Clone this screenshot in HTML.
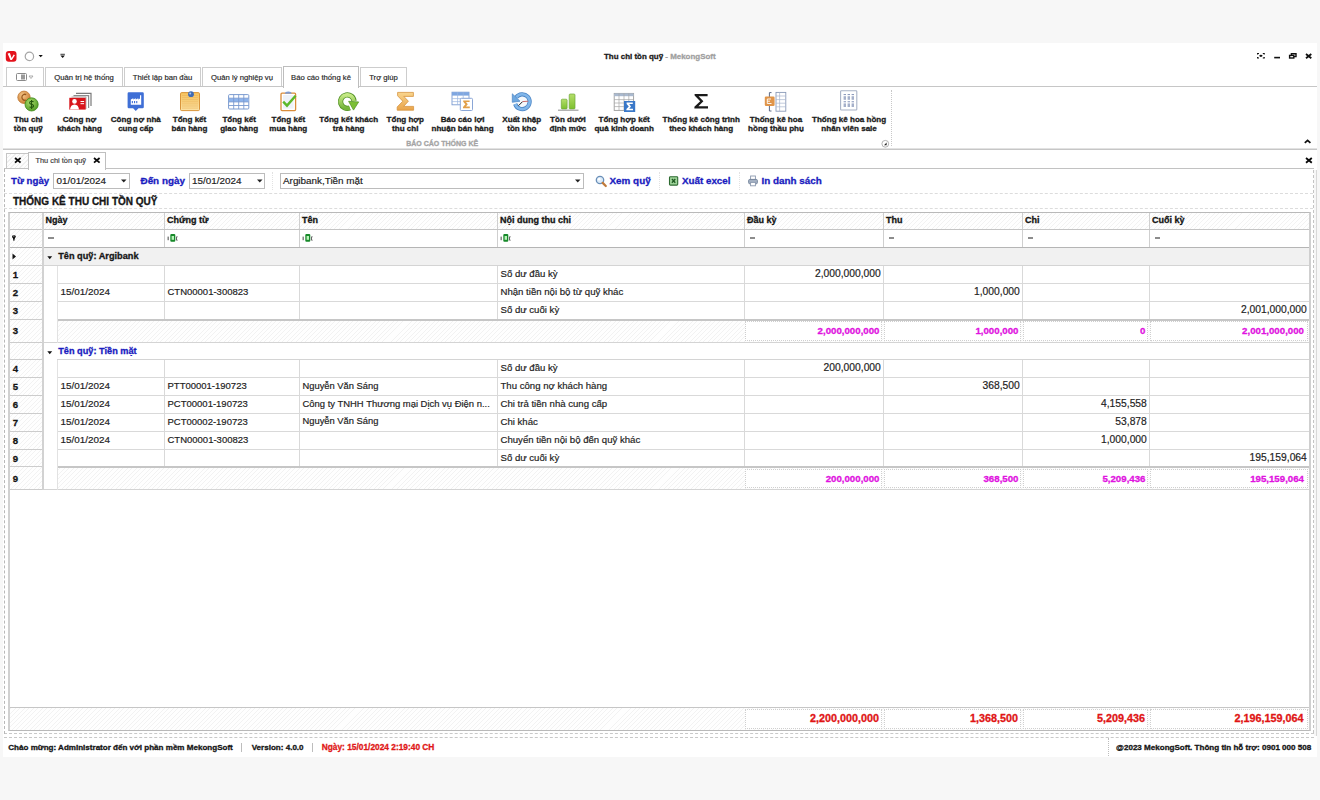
<!DOCTYPE html>
<html><head><meta charset="utf-8">
<style>
*{margin:0;padding:0;box-sizing:border-box}
html,body{width:1320px;height:800px;overflow:hidden;background:#f7f7f7;font-family:"Liberation Sans",sans-serif;color:#1e1e1e;position:relative}
.a{position:absolute}
.t{position:absolute;white-space:nowrap;line-height:1;-webkit-text-stroke:0.18px currentColor}
.b{-webkit-text-stroke:0.3px currentColor}
</style></head><body>
<div class="a" style="left:3px;top:43px;width:1314px;height:714px;background:#fff"></div>
<svg class="a" style="left:5px;top:50px" width="13" height="13" viewBox="0 0 13 13"><rect x="0.8" y="1" width="10.7" height="10.7" rx="3" fill="#e4121c"/><path d="M2.6 3.4 L4.9 3.1 L6.6 8 L8.6 4.6 L9.9 5.2 L6.9 10 L5.4 10 Z" fill="#fff"/></svg>
<svg class="a" style="left:24px;top:51px" width="22" height="11" viewBox="0 0 22 11"><circle cx="5.4" cy="5.4" r="4.2" fill="#fff" stroke="#a6a6a6" stroke-width="1.2"/><path d="M14.6 4.1 L18.8 4.1 L16.7 6.2 Z" fill="#111"/></svg>
<svg class="a" style="left:58px;top:52px" width="8" height="8" viewBox="0 0 8 8"><rect x="2.4" y="1.8" width="4.5" height="0.9" fill="#222"/><path d="M2.4 3.5 L6.9 3.5 L4.65 6 Z" fill="#111"/></svg>
<div class="t b" style="left:604.00px;top:52.77px;font-size:7.95px;font-weight:bold;color:#1a1a1a;">Thu chi tồn quỹ <span style="color:#a0a0a0">- MekongSoft</span></div>
<svg class="a" style="left:1255px;top:51px" width="60" height="11" viewBox="0 0 60 11">
<g fill="none" stroke="#111" stroke-width="1.2">
<path d="M2.6 3.6 V2.5 H4 M7.8 2.5 H9.2 V3.6 M9.2 6 V7 H7.8 M4 7 H2.6 V6"/>
<ellipse cx="5.9" cy="4.8" rx="1.6" ry="1.1" fill="#111" stroke="none"/>
<path d="M19.2 6.6 H25" stroke-width="1.6"/>
<rect x="34.6" y="4.4" width="4.2" height="2.6" stroke-width="1.4"/>
<path d="M36.4 4.2 V2.8 H41 V5.6 H39" stroke-width="1.4"/>
<path d="M51 3 L56.3 7.2 M56.3 3 L51 7.2" stroke-width="1.8"/>
</g></svg>
<div class="a" style="left:3px;top:86px;width:1314px;height:1px;background:#c6c6c6"></div>
<div class="a" style="left:6px;top:67px;width:38px;height:19px;background:#fff;border:1px solid #cdcdcd;border-bottom:none"></div>
<div class="a" style="left:45px;top:67px;width:78px;height:19px;background:#fff;border:1px solid #cdcdcd;border-bottom:none"></div>
<div class="t" style="left:45px;width:78px;text-align:center;top:73.98px;font-size:7.7px;color:#2a2a2a">Quản trị hệ thống</div>
<div class="a" style="left:124px;top:67px;width:77px;height:19px;background:#fff;border:1px solid #cdcdcd;border-bottom:none"></div>
<div class="t" style="left:124px;width:77px;text-align:center;top:73.98px;font-size:7.7px;color:#2a2a2a">Thiết lập ban đầu</div>
<div class="a" style="left:202px;top:67px;width:80px;height:19px;background:#fff;border:1px solid #cdcdcd;border-bottom:none"></div>
<div class="t" style="left:202px;width:80px;text-align:center;top:73.98px;font-size:7.7px;color:#2a2a2a">Quản lý nghiệp vụ</div>
<div class="a" style="left:283px;top:66px;width:76px;height:22px;background:#fff;border:1px solid #bdbdbd;border-bottom:none"></div>
<div class="t" style="left:283px;width:76px;text-align:center;top:73.98px;font-size:7.7px;color:#2a2a2a">Báo cáo thống kê</div>
<div class="a" style="left:360px;top:67px;width:47px;height:19px;background:#fff;border:1px solid #cdcdcd;border-bottom:none"></div>
<div class="t" style="left:360px;width:47px;text-align:center;top:73.98px;font-size:7.7px;color:#2a2a2a">Trợ giúp</div>
<svg class="a" style="left:15px;top:72px" width="22" height="10" viewBox="0 0 22 10"><rect x="1.5" y="1.5" width="10" height="7" rx="1" fill="#fff" stroke="#8a8a8a"/><rect x="6" y="2.5" width="4" height="5" fill="#9a9a9a"/><path d="M14 4 L18 4 L16 6.5 Z" fill="none" stroke="#999" stroke-width="0.8"/></svg>
<div class="t b" style="left:-31.70px;top:115.89px;font-size:8.05px;font-weight:bold;color:#1c1c1c;width:120px;text-align:center">Thu chi</div>
<div class="t b" style="left:-31.70px;top:124.89px;font-size:8.05px;font-weight:bold;color:#1c1c1c;width:120px;text-align:center">tồn quỹ</div>
<div class="t b" style="left:19.50px;top:115.89px;font-size:8.05px;font-weight:bold;color:#1c1c1c;width:120px;text-align:center">Công nợ</div>
<div class="t b" style="left:19.50px;top:124.89px;font-size:8.05px;font-weight:bold;color:#1c1c1c;width:120px;text-align:center">khách hàng</div>
<div class="t b" style="left:75.80px;top:115.89px;font-size:8.05px;font-weight:bold;color:#1c1c1c;width:120px;text-align:center">Công nợ nhà</div>
<div class="t b" style="left:75.80px;top:124.89px;font-size:8.05px;font-weight:bold;color:#1c1c1c;width:120px;text-align:center">cung cấp</div>
<div class="t b" style="left:129.50px;top:115.89px;font-size:8.05px;font-weight:bold;color:#1c1c1c;width:120px;text-align:center">Tổng kết</div>
<div class="t b" style="left:129.50px;top:124.89px;font-size:8.05px;font-weight:bold;color:#1c1c1c;width:120px;text-align:center">bán hàng</div>
<div class="t b" style="left:179.15px;top:115.89px;font-size:8.05px;font-weight:bold;color:#1c1c1c;width:120px;text-align:center">Tổng kết</div>
<div class="t b" style="left:179.15px;top:124.89px;font-size:8.05px;font-weight:bold;color:#1c1c1c;width:120px;text-align:center">giao hàng</div>
<div class="t b" style="left:228.30px;top:115.89px;font-size:8.05px;font-weight:bold;color:#1c1c1c;width:120px;text-align:center">Tổng kết</div>
<div class="t b" style="left:228.30px;top:124.89px;font-size:8.05px;font-weight:bold;color:#1c1c1c;width:120px;text-align:center">mua hàng</div>
<div class="t b" style="left:288.65px;top:115.89px;font-size:8.05px;font-weight:bold;color:#1c1c1c;width:120px;text-align:center">Tổng kết khách</div>
<div class="t b" style="left:288.65px;top:124.89px;font-size:8.05px;font-weight:bold;color:#1c1c1c;width:120px;text-align:center">trả hàng</div>
<div class="t b" style="left:345.30px;top:115.89px;font-size:8.05px;font-weight:bold;color:#1c1c1c;width:120px;text-align:center">Tổng hợp</div>
<div class="t b" style="left:345.30px;top:124.89px;font-size:8.05px;font-weight:bold;color:#1c1c1c;width:120px;text-align:center">thu chi</div>
<div class="t b" style="left:402.55px;top:115.89px;font-size:8.05px;font-weight:bold;color:#1c1c1c;width:120px;text-align:center">Báo cáo lợi</div>
<div class="t b" style="left:402.55px;top:124.89px;font-size:8.05px;font-weight:bold;color:#1c1c1c;width:120px;text-align:center">nhuận bán hàng</div>
<div class="t b" style="left:461.80px;top:115.89px;font-size:8.05px;font-weight:bold;color:#1c1c1c;width:120px;text-align:center">Xuất nhập</div>
<div class="t b" style="left:461.80px;top:124.89px;font-size:8.05px;font-weight:bold;color:#1c1c1c;width:120px;text-align:center">tồn kho</div>
<div class="t b" style="left:507.90px;top:115.89px;font-size:8.05px;font-weight:bold;color:#1c1c1c;width:120px;text-align:center">Tồn dưới</div>
<div class="t b" style="left:507.90px;top:124.89px;font-size:8.05px;font-weight:bold;color:#1c1c1c;width:120px;text-align:center">định mức</div>
<div class="t b" style="left:564.15px;top:115.89px;font-size:8.05px;font-weight:bold;color:#1c1c1c;width:120px;text-align:center">Tổng hợp kết</div>
<div class="t b" style="left:564.15px;top:124.89px;font-size:8.05px;font-weight:bold;color:#1c1c1c;width:120px;text-align:center">quả kinh doanh</div>
<div class="t b" style="left:641.15px;top:115.89px;font-size:8.05px;font-weight:bold;color:#1c1c1c;width:120px;text-align:center">Thống kê công trình</div>
<div class="t b" style="left:641.15px;top:124.89px;font-size:8.05px;font-weight:bold;color:#1c1c1c;width:120px;text-align:center">theo khách hàng</div>
<div class="t b" style="left:716.00px;top:115.89px;font-size:8.05px;font-weight:bold;color:#1c1c1c;width:120px;text-align:center">Thống kê hoa</div>
<div class="t b" style="left:716.00px;top:124.89px;font-size:8.05px;font-weight:bold;color:#1c1c1c;width:120px;text-align:center">hồng thầu phụ</div>
<div class="t b" style="left:789.10px;top:115.89px;font-size:8.05px;font-weight:bold;color:#1c1c1c;width:120px;text-align:center">Thống kê hoa hồng</div>
<div class="t b" style="left:789.10px;top:124.89px;font-size:8.05px;font-weight:bold;color:#1c1c1c;width:120px;text-align:center">nhân viên sale</div>
<div class="t b" style="left:406.20px;top:139.87px;font-size:7px;font-weight:bold;color:#a4a4a4;">BÁO CÁO THỐNG KÊ</div>
<svg class="a" style="left:880px;top:139px" width="10" height="10" viewBox="0 0 10 10"><circle cx="5.3" cy="4.8" r="3.4" fill="#fff" stroke="#a0a0a0" stroke-width="0.8"/><path d="M4 6.2 L6.6 6.2 L6.6 3.6 Z" fill="#222"/></svg>
<div class="a" style="left:891px;top:90px;width:1px;height:56px;border-left:1px dotted #c8c8c8"></div>
<svg class="a" style="left:1302px;top:137px" width="11" height="9" viewBox="0 0 11 9"><path d="M2.8 5.9 L5.6 3.3 L8.4 5.9" fill="none" stroke="#111" stroke-width="1.7"/></svg>
<div class="a" style="left:3px;top:148px;width:1314px;height:1px;background:#e2e2e2"></div>
<div class="a" style="left:3px;top:149px;width:1314px;height:1px;background:#c6c6c6"></div>
<svg class="a" style="left:0;top:0" width="900" height="120" viewBox="0 0 900 120">
<defs>
<radialGradient id="gOr" cx="0.4" cy="0.35" r="0.7"><stop offset="0" stop-color="#f6c98a"/><stop offset="1" stop-color="#c9782e"/></radialGradient>
<radialGradient id="gGr" cx="0.4" cy="0.35" r="0.7"><stop offset="0" stop-color="#a9dc6a"/><stop offset="1" stop-color="#4f9a23"/></radialGradient>
<linearGradient id="gNote" x1="0" y1="0" x2="0" y2="1"><stop offset="0" stop-color="#f7c35c"/><stop offset="1" stop-color="#fbe3a6"/></linearGradient>
<linearGradient id="gSig" x1="0" y1="0" x2="0" y2="1"><stop offset="0" stop-color="#f9d58e"/><stop offset="1" stop-color="#e9a44a"/></linearGradient>
<linearGradient id="gRef" x1="0" y1="0" x2="0" y2="1"><stop offset="0" stop-color="#c6ea86"/><stop offset="1" stop-color="#74b43a"/></linearGradient>
<linearGradient id="gBar" x1="0" y1="0" x2="0" y2="1"><stop offset="0" stop-color="#b5de6a"/><stop offset="1" stop-color="#7cbf2e"/></linearGradient>
</defs>
<!-- 1 coins -->
<circle cx="24" cy="97.3" r="6.2" fill="url(#gOr)" stroke="#c07a35" stroke-width="0.8"/>
<path d="M26.2 94.6 A3 3 0 1 0 26.2 100" fill="none" stroke="#9a5a1f" stroke-width="1.3"/>
<circle cx="31.6" cy="104.4" r="6.6" fill="url(#gGr)" stroke="#3f8a1b" stroke-width="0.8"/>
<path d="M33.6 101.8 Q31.6 100.6 29.9 101.9 Q29 103.6 31.6 104.3 Q34.2 105 33.3 106.8 Q31.6 108.1 29.6 106.9 M31.6 100 V109" fill="none" stroke="#23570d" stroke-width="1.1"/>
<!-- 2 cards -->
<path d="M76 93.3 H91 V106" fill="none" stroke="#7a7a7a" stroke-width="1.2"/>
<path d="M73.5 95.6 H88.6 V108" fill="none" stroke="#8c8c8c" stroke-width="1.2"/>
<path d="M71.5 97 H86 V109" fill="none" stroke="#a0a0a0" stroke-width="0.8"/>
<rect x="69.3" y="97.8" width="16.4" height="11.8" fill="#d8141a"/>
<circle cx="74.5" cy="101.4" r="2.3" fill="#fff"/>
<path d="M70 109.6 Q70.5 104.8 74.5 104.6 Q78.5 104.8 79 109.6 Z" fill="#fff"/>
<rect x="80.5" y="101" width="3.6" height="1" fill="#fff"/><rect x="80.5" y="103.2" width="3.6" height="1" fill="#fff"/>
<!-- 3 factory pin -->
<path d="M128.8 92.2 H142.6 Q143.8 92.2 143.8 93.4 V107 Q143.8 108.2 142.6 108.2 H138.5 L135.8 111 L133.1 108.2 H128.8 Q127.6 108.2 127.6 107 V93.4 Q127.6 92.2 128.8 92.2 Z" fill="#3f6fd6"/>
<path d="M130.8 104.8 V99.6 L133.3 98.2 V99.6 L135.8 98.2 V99.6 L138.3 98.2 V99.6 L140 98.6 V95.2 H141.2 V104.8 Z" fill="#fff"/>
<rect x="131.8" y="101" width="1.1" height="2.2" fill="#3f6fd6"/><rect x="134" y="101" width="1.1" height="2.2" fill="#3f6fd6"/><rect x="136.2" y="101" width="1.1" height="2.2" fill="#3f6fd6"/>
<!-- 4 notepad -->
<rect x="180.5" y="92.6" width="19" height="18" rx="1.2" fill="url(#gNote)" stroke="#d9953b" stroke-width="1"/>
<g stroke="#e9b25a" stroke-width="0.6"><path d="M182 95.5 H198 M182 97.6 H198 M182 99.7 H198 M182 101.8 H198 M182 103.9 H198 M182 106 H198 M182 108.1 H198"/></g>
<circle cx="191" cy="94.2" r="2.9" fill="#3f6bb5"/><circle cx="190.2" cy="93.4" r="1" fill="#a9c8ef"/>
<!-- 5 grid table -->
<rect x="228.6" y="94.6" width="20.2" height="14.4" rx="1" fill="#fff" stroke="#7b9bd0" stroke-width="1"/>
<rect x="229" y="98.3" width="19.4" height="3.6" fill="#8cb3ec"/>
<g stroke="#7b9bd0" stroke-width="0.9"><path d="M228.6 98.2 H248.8 M228.6 101.9 H248.8 M228.6 105.5 H248.8 M233.7 94.6 V109 M238.7 94.6 V109 M243.8 94.6 V109"/></g>
<!-- 6 clipboard -->
<rect x="281" y="93.2" width="14.6" height="17.4" rx="1" fill="#fff" stroke="#d98c3a" stroke-width="1.3"/>
<rect x="283" y="95" width="10.6" height="13.6" fill="#eef2f8"/>
<path d="M285 93.8 Q285 91.4 288.3 91.4 Q291.6 91.4 291.6 93.8 Z" fill="#7f9bd0"/>
<path d="M283.2 101.6 L287 105.6 L295.6 95.8" fill="none" stroke="#5cb82a" stroke-width="2.4"/>
<!-- 7 refresh -->
<path d="M349.8 107.9 A6.75 6.75 0 1 1 354.0 101.0" fill="none" stroke="#4f8f22" stroke-width="5.3"/>
<path d="M349.8 107.9 A6.75 6.75 0 1 1 354.0 101.0" fill="none" stroke="url(#gRef)" stroke-width="3.8"/>
<path d="M348.6 101.3 L358.7 101.9 L353.5 110.1 Z" fill="#7cbf35" stroke="#4f8f22" stroke-width="0.7" stroke-linejoin="round"/>
<!-- 8 sigma orange -->
<path d="M397.6 92.4 H413.4 V96.4 H403.8 L408.4 101.2 L403.6 106.4 H413.6 V110.2 H397.2 V107 L402.8 101.2 L397.6 95.8 Z" fill="url(#gSig)" stroke="#d69440" stroke-width="0.8" stroke-linejoin="round"/>
<!-- 9 table + sigma -->
<rect x="452" y="92.2" width="17" height="12.6" fill="#fff" stroke="#7b9bd0" stroke-width="0.9"/>
<rect x="452" y="92.2" width="17" height="3.4" fill="#7ea6e0"/>
<g stroke="#9bb5df" stroke-width="0.7"><path d="M452 98.6 H469 M452 101.6 H469 M457.6 92.2 V104.8 M463.2 92.2 V104.8"/></g>
<rect x="460.3" y="98.3" width="12.2" height="12.2" rx="1" fill="#fff" stroke="#8aa6d6" stroke-width="1"/>
<path d="M463.2 100.4 H469.6 V102 H466 L467.8 104.3 L466 106.6 H469.8 V108.3 H463 V106.9 L465.3 104.3 L463.2 101.8 Z" fill="#e2a04a"/>
<!-- 10 clock refresh -->
<circle cx="522.1" cy="101.8" r="5.6" fill="#f4f8fc"/>
<path d="M516.2 97.4 A7.4 7.4 0 1 1 515.2 104" fill="none" stroke="#4a84c4" stroke-width="4.2"/>
<path d="M516.2 97.4 A7.4 7.4 0 1 1 515.2 104" fill="none" stroke="#80b6ea" stroke-width="2.6"/>
<path d="M512.3 93.8 L512.3 102.3 L520 101.2 Z" fill="#6ea8e0" stroke="#4a84c4" stroke-width="0.7" stroke-linejoin="round"/>
<path d="M518.6 105.6 L522.6 101.6" stroke="#222" stroke-width="1"/>
<path d="M522.6 101.6 L528.2 101.2" stroke="#c86a6a" stroke-width="1"/>
<!-- 11 bars -->
<rect x="561.3" y="99.2" width="5.8" height="9.8" rx="1" fill="url(#gBar)" stroke="#6fa83a" stroke-width="0.7"/>
<rect x="569.2" y="94" width="5.8" height="15" rx="1" fill="url(#gBar)" stroke="#6fa83a" stroke-width="0.7"/>
<rect x="558" y="109.6" width="20.5" height="1.2" fill="#a0a0a0"/>
<!-- 12 table + blue sigma -->
<rect x="614.2" y="93.4" width="19.4" height="17" fill="#fff" stroke="#9c9c9c" stroke-width="0.9"/>
<rect x="614.2" y="93.4" width="19.4" height="2.8" fill="#a9b9cf"/>
<g stroke="#a6a6a6" stroke-width="0.7"><path d="M614.2 99.6 H633.6 M614.2 103 H633.6 M614.2 106.6 H633.6 M619 93.4 V110.4 M624 93.4 V110.4 M628.8 93.4 V110.4"/></g>
<rect x="624" y="101" width="11.2" height="11" fill="#3a78c8"/>
<path d="M626.6 102.6 H632.8 V104 H629.2 L631 106.4 L629.2 108.8 H633 V110.3 H626.4 V109 L628.8 106.4 L626.6 103.9 Z" fill="#fff"/>
<!-- 13 black sigma -->
<path d="M694.6 94 H707.6 V96.2 H698.6 L703.4 101.2 L698.4 106.3 H708 V108.4 H694.4 V106.8 L700.2 101.2 L694.6 95.6 Z" fill="#1a1a1a"/>
<!-- 14 hoa hong thau phu -->
<path d="M771.5 92.6 H769.4 V111 H771.5" fill="none" stroke="#5c6a86" stroke-width="1"/>
<rect x="776" y="92.4" width="9.8" height="18.8" fill="#fff" stroke="#8a9ab8" stroke-width="0.9"/>
<g stroke="#a9b6cf" stroke-width="0.7"><path d="M776 96 H785.8 M776 99.6 H785.8 M776 103.2 H785.8 M776 106.8 H785.8 M779.6 92.4 V111.2"/></g>
<rect x="764.8" y="96.6" width="9.8" height="9.4" rx="1.2" fill="#e0954a"/>
<path d="M767.3 99 H771 M767.3 99 V103.5 H771.5 M767.3 101.2 H770" stroke="#fff" stroke-width="0.9" fill="none"/>
<!-- 15 page grid -->
<rect x="840.6" y="90.8" width="16.2" height="19.2" rx="0.8" fill="#fff" stroke="#a8b2c6" stroke-width="1.1"/>
<g fill="#8e9cbd"><rect x="843.6" y="94" width="2.4" height="1.1"/><rect x="847.6" y="94" width="2.4" height="1.1"/><rect x="851.6" y="94" width="2.4" height="1.1"/>
<rect x="843.6" y="96.2" width="2.4" height="3.6" opacity="0.8"/><rect x="847.6" y="96.2" width="2.4" height="3.6" opacity="0.8"/><rect x="851.6" y="96.2" width="2.4" height="3.6" opacity="0.8"/>
<rect x="843.6" y="101.2" width="2.4" height="1.1"/><rect x="847.6" y="101.2" width="2.4" height="1.1"/><rect x="851.6" y="101.2" width="2.4" height="1.1"/>
<rect x="843.6" y="103.4" width="2.4" height="3.6" opacity="0.8"/><rect x="847.6" y="103.4" width="2.4" height="3.6" opacity="0.8"/><rect x="851.6" y="103.4" width="2.4" height="3.6" opacity="0.8"/></g>
</svg>

<div class="a" style="left:4px;top:168px;width:1310px;height:567px;border-top:1px solid #c2c2c2;background:#fff"></div>
<div class="a" style="left:6px;top:153px;width:23px;height:15px;border:1px solid #c6c6c6;border-bottom:none;background:#fcfcfc repeating-linear-gradient(135deg,#fdfdfd 0,#fdfdfd 2.3px,#eeeeee 2.4px,#eeeeee 3.2px)"></div>
<div class="a" style="left:28px;top:152px;width:78px;height:18px;border:1px solid #bfbfbf;border-bottom:none;background:#fff"></div>
<div class="t" style="left:35.50px;top:156.54px;font-size:7.4px;font-weight:normal;color:#404040;">Thu chi tồn quỹ</div>
<svg class="a" style="left:13.8px;top:157.4px" width="7.6" height="6.6" viewBox="0 0 7.6 6.6"><path d="M1 1 L6.6 5.6 M6.6 1 L1 5.6" stroke="#0a0a0a" stroke-width="1.8"/></svg>
<svg class="a" style="left:93.4px;top:157.4px" width="7.6" height="6.6" viewBox="0 0 7.6 6.6"><path d="M1 1 L6.6 5.6 M6.6 1 L1 5.6" stroke="#0a0a0a" stroke-width="1.8"/></svg>
<svg class="a" style="left:1305.3px;top:156.8px" width="7.8" height="6.8" viewBox="0 0 7.8 6.8"><path d="M1 1 L6.8 5.8 M6.8 1 L1 5.8" stroke="#0a0a0a" stroke-width="1.8"/></svg>
<div class="a" style="left:1316px;top:170px;width:1px;height:566px;background:#d8d8d8"></div>
<div class="a" style="left:1314px;top:170px;width:2px;height:566px;background:#f7f7f7"></div>
<div class="a" style="left:4px;top:193px;width:1309px;height:1px;border-top:1px dashed #dcdcdc"></div>
<div class="a" style="left:4px;top:208px;width:1309px;height:1px;border-top:1px dashed #dcdcdc"></div>
<div class="a" style="left:4px;top:733px;width:1310px;height:1px;border-top:1px dashed #c8c8c8"></div>
<div class="a" style="left:4px;top:169px;width:1px;height:565px;border-left:1px dashed #b8b8b8"></div>
<div class="a" style="left:1313px;top:170px;width:1px;height:563px;border-left:1px dashed #c4c4c4"></div>
<div class="t b" style="left:11.00px;top:176.29px;font-size:9.7px;font-weight:bold;color:#1a1cc0;">Từ ngày</div>
<div class="a" style="left:53px;top:173px;width:77px;height:16px;border:1px solid #bcbcbc;background:#fff"></div>
<div class="t" style="left:56.50px;top:176.12px;font-size:9.9px;font-weight:normal;color:#222;">01/01/2024</div>
<div class="t b" style="left:140.50px;top:176.12px;font-size:9.9px;font-weight:bold;color:#1a1cc0;">Đến ngày</div>
<div class="a" style="left:189px;top:173px;width:76px;height:16px;border:1px solid #bcbcbc;background:#fff"></div>
<div class="t" style="left:192.00px;top:176.12px;font-size:9.9px;font-weight:normal;color:#222;">15/01/2024</div>
<div class="a" style="left:272px;top:172px;width:1px;height:18px;border-left:1px dotted #e2e2e2"></div>
<div class="a" style="left:280px;top:173px;width:304px;height:16px;border:1px solid #bcbcbc;background:#fff"></div>
<div class="t" style="left:283.00px;top:176.12px;font-size:9.9px;font-weight:normal;color:#222;">Argibank,Tiền mặt</div>
<svg class="a" style="left:121px;top:179px" width="6" height="4" viewBox="0 0 6 4"><path d="M0 0.5 L5.5 0.5 L2.75 3.5 Z" fill="#222"/></svg>
<svg class="a" style="left:257px;top:179px" width="6" height="4" viewBox="0 0 6 4"><path d="M0 0.5 L5.5 0.5 L2.75 3.5 Z" fill="#222"/></svg>
<svg class="a" style="left:575px;top:179px" width="6" height="4" viewBox="0 0 6 4"><path d="M0 0.5 L5.5 0.5 L2.75 3.5 Z" fill="#222"/></svg>
<svg class="a" style="left:594px;top:174px" width="14" height="14" viewBox="0 0 14 14"><circle cx="6" cy="6" r="3.7" fill="#dcebf8" stroke="#6a8fb8" stroke-width="1.3"/><circle cx="5.2" cy="5.2" r="1.3" fill="#fff"/><path d="M8.7 8.9 L11.8 12" stroke="#c07a3a" stroke-width="2.2" stroke-linecap="round"/></svg>
<div class="t b" style="left:609.50px;top:176.12px;font-size:9.9px;font-weight:bold;color:#1a1cc0;">Xem quỹ</div>
<div class="a" style="left:659px;top:172px;width:1px;height:18px;border-left:1px dotted #e2e2e2"></div>
<svg class="a" style="left:668px;top:175px" width="11" height="11" viewBox="0 0 11 11"><rect x="1.5" y="1.7" width="8.2" height="8.4" rx="0.9" fill="#9fd49a" stroke="#2d6a30" stroke-width="1.1"/><path d="M3.9 4 L7.3 7.8 M7.3 4 L3.9 7.8" stroke="#1f5a22" stroke-width="1.3"/></svg>
<div class="t b" style="left:682.00px;top:176.20px;font-size:9.8px;font-weight:bold;color:#1a1cc0;">Xuất excel</div>
<div class="a" style="left:739px;top:172px;width:1px;height:18px;border-left:1px dotted #e2e2e2"></div>
<svg class="a" style="left:747px;top:175px" width="12" height="12" viewBox="0 0 12 12"><rect x="3.6" y="1" width="4.8" height="3.6" fill="#fff" stroke="#8a98ae" stroke-width="0.9"/><rect x="1.6" y="4.4" width="8.8" height="4.4" rx="1.2" fill="#a4b0c2" stroke="#72829a" stroke-width="0.9"/><rect x="3.6" y="7.4" width="4.8" height="3.4" fill="#fff" stroke="#8a98ae" stroke-width="0.9"/></svg>
<div class="t b" style="left:761.50px;top:176.12px;font-size:9.9px;font-weight:bold;color:#1a1cc0;">In danh sách</div>
<div class="t b" style="left:13.00px;top:196.73px;font-size:10px;font-weight:bold;color:#161616;">THỐNG KÊ THU CHI TỒN QUỸ</div>
<div class="a" style="left:8.0px;top:212.0px;width:1301.0px;height:17.0px;background:#fdfdfd repeating-linear-gradient(135deg,#fefefe 0,#fefefe 2.5px,#f2f2f2 2.5px,#f2f2f2 3.2px)"></div>
<div class="a" style="left:42.5px;top:229.0px;width:1266.5px;height:18.5px;background:#fff"></div>
<div class="a" style="left:8.0px;top:229.0px;width:34.5px;height:18.5px;background:#fdfdfd repeating-linear-gradient(135deg,#fefefe 0,#fefefe 2.5px,#f2f2f2 2.5px,#f2f2f2 3.2px)"></div>
<div class="a" style="left:8.0px;top:247.5px;width:34.5px;height:242.1px;background:#fdfdfd repeating-linear-gradient(135deg,#fefefe 0,#fefefe 2.5px,#f2f2f2 2.5px,#f2f2f2 3.2px)"></div>
<div class="a" style="left:42.5px;top:247.5px;width:1266.5px;height:18.0px;background:#f1f1f1"></div>
<div class="a" style="left:8.0px;top:265.0px;width:34.5px;height:1px;background:#cccccc"></div>
<div class="a" style="left:8.0px;top:283.0px;width:34.5px;height:1px;background:#cccccc"></div>
<div class="a" style="left:8.0px;top:300.5px;width:34.5px;height:1px;background:#cccccc"></div>
<div class="a" style="left:8.0px;top:318.5px;width:34.5px;height:1px;background:#cccccc"></div>
<div class="a" style="left:57.0px;top:319.0px;width:1252.0px;height:23.5px;background:#fdfdfd repeating-linear-gradient(135deg,#fefefe 0,#fefefe 2.5px,#f2f2f2 2.5px,#f2f2f2 3.2px)"></div>
<div class="a" style="left:745.0px;top:321.0px;width:137.0px;height:19.5px;border:1px dotted #cfcfcf;background:#fff"></div>
<div class="a" style="left:884.0px;top:321.0px;width:137.0px;height:19.5px;border:1px dotted #cfcfcf;background:#fff"></div>
<div class="a" style="left:1023.0px;top:321.0px;width:125.0px;height:19.5px;border:1px dotted #cfcfcf;background:#fff"></div>
<div class="a" style="left:1150.0px;top:321.0px;width:157.5px;height:19.5px;border:1px dotted #cfcfcf;background:#fff"></div>
<div class="a" style="left:8.0px;top:342.0px;width:34.5px;height:1px;background:#cccccc"></div>
<div class="a" style="left:8.0px;top:359.1px;width:34.5px;height:1px;background:#cccccc"></div>
<div class="a" style="left:8.0px;top:377.0px;width:34.5px;height:1px;background:#cccccc"></div>
<div class="a" style="left:8.0px;top:394.9px;width:34.5px;height:1px;background:#cccccc"></div>
<div class="a" style="left:8.0px;top:412.8px;width:34.5px;height:1px;background:#cccccc"></div>
<div class="a" style="left:8.0px;top:430.7px;width:34.5px;height:1px;background:#cccccc"></div>
<div class="a" style="left:8.0px;top:448.5px;width:34.5px;height:1px;background:#cccccc"></div>
<div class="a" style="left:8.0px;top:466.1px;width:34.5px;height:1px;background:#cccccc"></div>
<div class="a" style="left:57.0px;top:466.6px;width:1252.0px;height:23.0px;background:#fdfdfd repeating-linear-gradient(135deg,#fefefe 0,#fefefe 2.5px,#f2f2f2 2.5px,#f2f2f2 3.2px)"></div>
<div class="a" style="left:745.0px;top:468.6px;width:137.0px;height:19.0px;border:1px dotted #cfcfcf;background:#fff"></div>
<div class="a" style="left:884.0px;top:468.6px;width:137.0px;height:19.0px;border:1px dotted #cfcfcf;background:#fff"></div>
<div class="a" style="left:1023.0px;top:468.6px;width:125.0px;height:19.0px;border:1px dotted #cfcfcf;background:#fff"></div>
<div class="a" style="left:1150.0px;top:468.6px;width:157.5px;height:19.0px;border:1px dotted #cfcfcf;background:#fff"></div>
<div class="a" style="left:8.0px;top:489.1px;width:34.5px;height:1px;background:#cccccc"></div>
<div class="a" style="left:42.5px;top:265.0px;width:1266.5px;height:1px;background:#d4d4d4"></div>
<div class="a" style="left:57.0px;top:283.0px;width:1252.0px;height:1px;background:#d9d9d9"></div>
<div class="a" style="left:164.0px;top:265.5px;width:1px;height:18.0px;background:#d9d9d9"></div>
<div class="a" style="left:299.0px;top:265.5px;width:1px;height:18.0px;background:#d9d9d9"></div>
<div class="a" style="left:497.0px;top:265.5px;width:1px;height:18.0px;background:#d9d9d9"></div>
<div class="a" style="left:744.0px;top:265.5px;width:1px;height:18.0px;background:#d9d9d9"></div>
<div class="a" style="left:883.0px;top:265.5px;width:1px;height:18.0px;background:#d9d9d9"></div>
<div class="a" style="left:1022.0px;top:265.5px;width:1px;height:18.0px;background:#d9d9d9"></div>
<div class="a" style="left:1149.0px;top:265.5px;width:1px;height:18.0px;background:#d9d9d9"></div>
<div class="a" style="left:57.0px;top:300.5px;width:1252.0px;height:1px;background:#d9d9d9"></div>
<div class="a" style="left:164.0px;top:283.5px;width:1px;height:17.5px;background:#d9d9d9"></div>
<div class="a" style="left:299.0px;top:283.5px;width:1px;height:17.5px;background:#d9d9d9"></div>
<div class="a" style="left:497.0px;top:283.5px;width:1px;height:17.5px;background:#d9d9d9"></div>
<div class="a" style="left:744.0px;top:283.5px;width:1px;height:17.5px;background:#d9d9d9"></div>
<div class="a" style="left:883.0px;top:283.5px;width:1px;height:17.5px;background:#d9d9d9"></div>
<div class="a" style="left:1022.0px;top:283.5px;width:1px;height:17.5px;background:#d9d9d9"></div>
<div class="a" style="left:1149.0px;top:283.5px;width:1px;height:17.5px;background:#d9d9d9"></div>
<div class="a" style="left:57.0px;top:318.5px;width:1252.0px;height:1px;background:#d9d9d9"></div>
<div class="a" style="left:164.0px;top:301.0px;width:1px;height:18.0px;background:#d9d9d9"></div>
<div class="a" style="left:299.0px;top:301.0px;width:1px;height:18.0px;background:#d9d9d9"></div>
<div class="a" style="left:497.0px;top:301.0px;width:1px;height:18.0px;background:#d9d9d9"></div>
<div class="a" style="left:744.0px;top:301.0px;width:1px;height:18.0px;background:#d9d9d9"></div>
<div class="a" style="left:883.0px;top:301.0px;width:1px;height:18.0px;background:#d9d9d9"></div>
<div class="a" style="left:1022.0px;top:301.0px;width:1px;height:18.0px;background:#d9d9d9"></div>
<div class="a" style="left:1149.0px;top:301.0px;width:1px;height:18.0px;background:#d9d9d9"></div>
<div class="a" style="left:57.0px;top:318.5px;width:1252.0px;height:2px;background:#c6c6c6"></div>
<div class="a" style="left:42.5px;top:342.0px;width:1266.5px;height:1px;background:#d4d4d4"></div>
<div class="a" style="left:57.0px;top:359.1px;width:1252.0px;height:1px;background:#d4d4d4"></div>
<div class="a" style="left:57.0px;top:377.0px;width:1252.0px;height:1px;background:#d9d9d9"></div>
<div class="a" style="left:164.0px;top:359.6px;width:1px;height:17.9px;background:#d9d9d9"></div>
<div class="a" style="left:299.0px;top:359.6px;width:1px;height:17.9px;background:#d9d9d9"></div>
<div class="a" style="left:497.0px;top:359.6px;width:1px;height:17.9px;background:#d9d9d9"></div>
<div class="a" style="left:744.0px;top:359.6px;width:1px;height:17.9px;background:#d9d9d9"></div>
<div class="a" style="left:883.0px;top:359.6px;width:1px;height:17.9px;background:#d9d9d9"></div>
<div class="a" style="left:1022.0px;top:359.6px;width:1px;height:17.9px;background:#d9d9d9"></div>
<div class="a" style="left:1149.0px;top:359.6px;width:1px;height:17.9px;background:#d9d9d9"></div>
<div class="a" style="left:57.0px;top:394.9px;width:1252.0px;height:1px;background:#d9d9d9"></div>
<div class="a" style="left:164.0px;top:377.5px;width:1px;height:17.9px;background:#d9d9d9"></div>
<div class="a" style="left:299.0px;top:377.5px;width:1px;height:17.9px;background:#d9d9d9"></div>
<div class="a" style="left:497.0px;top:377.5px;width:1px;height:17.9px;background:#d9d9d9"></div>
<div class="a" style="left:744.0px;top:377.5px;width:1px;height:17.9px;background:#d9d9d9"></div>
<div class="a" style="left:883.0px;top:377.5px;width:1px;height:17.9px;background:#d9d9d9"></div>
<div class="a" style="left:1022.0px;top:377.5px;width:1px;height:17.9px;background:#d9d9d9"></div>
<div class="a" style="left:1149.0px;top:377.5px;width:1px;height:17.9px;background:#d9d9d9"></div>
<div class="a" style="left:57.0px;top:412.8px;width:1252.0px;height:1px;background:#d9d9d9"></div>
<div class="a" style="left:164.0px;top:395.4px;width:1px;height:17.9px;background:#d9d9d9"></div>
<div class="a" style="left:299.0px;top:395.4px;width:1px;height:17.9px;background:#d9d9d9"></div>
<div class="a" style="left:497.0px;top:395.4px;width:1px;height:17.9px;background:#d9d9d9"></div>
<div class="a" style="left:744.0px;top:395.4px;width:1px;height:17.9px;background:#d9d9d9"></div>
<div class="a" style="left:883.0px;top:395.4px;width:1px;height:17.9px;background:#d9d9d9"></div>
<div class="a" style="left:1022.0px;top:395.4px;width:1px;height:17.9px;background:#d9d9d9"></div>
<div class="a" style="left:1149.0px;top:395.4px;width:1px;height:17.9px;background:#d9d9d9"></div>
<div class="a" style="left:57.0px;top:430.7px;width:1252.0px;height:1px;background:#d9d9d9"></div>
<div class="a" style="left:164.0px;top:413.3px;width:1px;height:17.9px;background:#d9d9d9"></div>
<div class="a" style="left:299.0px;top:413.3px;width:1px;height:17.9px;background:#d9d9d9"></div>
<div class="a" style="left:497.0px;top:413.3px;width:1px;height:17.9px;background:#d9d9d9"></div>
<div class="a" style="left:744.0px;top:413.3px;width:1px;height:17.9px;background:#d9d9d9"></div>
<div class="a" style="left:883.0px;top:413.3px;width:1px;height:17.9px;background:#d9d9d9"></div>
<div class="a" style="left:1022.0px;top:413.3px;width:1px;height:17.9px;background:#d9d9d9"></div>
<div class="a" style="left:1149.0px;top:413.3px;width:1px;height:17.9px;background:#d9d9d9"></div>
<div class="a" style="left:57.0px;top:448.5px;width:1252.0px;height:1px;background:#d9d9d9"></div>
<div class="a" style="left:164.0px;top:431.2px;width:1px;height:17.8px;background:#d9d9d9"></div>
<div class="a" style="left:299.0px;top:431.2px;width:1px;height:17.8px;background:#d9d9d9"></div>
<div class="a" style="left:497.0px;top:431.2px;width:1px;height:17.8px;background:#d9d9d9"></div>
<div class="a" style="left:744.0px;top:431.2px;width:1px;height:17.8px;background:#d9d9d9"></div>
<div class="a" style="left:883.0px;top:431.2px;width:1px;height:17.8px;background:#d9d9d9"></div>
<div class="a" style="left:1022.0px;top:431.2px;width:1px;height:17.8px;background:#d9d9d9"></div>
<div class="a" style="left:1149.0px;top:431.2px;width:1px;height:17.8px;background:#d9d9d9"></div>
<div class="a" style="left:57.0px;top:466.1px;width:1252.0px;height:1px;background:#d9d9d9"></div>
<div class="a" style="left:164.0px;top:449.0px;width:1px;height:17.6px;background:#d9d9d9"></div>
<div class="a" style="left:299.0px;top:449.0px;width:1px;height:17.6px;background:#d9d9d9"></div>
<div class="a" style="left:497.0px;top:449.0px;width:1px;height:17.6px;background:#d9d9d9"></div>
<div class="a" style="left:744.0px;top:449.0px;width:1px;height:17.6px;background:#d9d9d9"></div>
<div class="a" style="left:883.0px;top:449.0px;width:1px;height:17.6px;background:#d9d9d9"></div>
<div class="a" style="left:1022.0px;top:449.0px;width:1px;height:17.6px;background:#d9d9d9"></div>
<div class="a" style="left:1149.0px;top:449.0px;width:1px;height:17.6px;background:#d9d9d9"></div>
<div class="a" style="left:57.0px;top:466.1px;width:1252.0px;height:2px;background:#c6c6c6"></div>
<div class="a" style="left:42.5px;top:489.1px;width:1266.5px;height:1px;background:#d4d4d4"></div>
<div class="a" style="left:56.5px;top:265.5px;width:1px;height:77.0px;background:#e2e2e2"></div>
<div class="a" style="left:56.5px;top:359.6px;width:1px;height:130.0px;background:#e2e2e2"></div>
<div class="a" style="left:42.5px;top:212.0px;width:1px;height:35.5px;background:#cfcfcf"></div>
<div class="a" style="left:164.0px;top:212.0px;width:1px;height:35.5px;background:#cfcfcf"></div>
<div class="a" style="left:299.0px;top:212.0px;width:1px;height:35.5px;background:#cfcfcf"></div>
<div class="a" style="left:497.0px;top:212.0px;width:1px;height:35.5px;background:#cfcfcf"></div>
<div class="a" style="left:744.0px;top:212.0px;width:1px;height:35.5px;background:#cfcfcf"></div>
<div class="a" style="left:883.0px;top:212.0px;width:1px;height:35.5px;background:#cfcfcf"></div>
<div class="a" style="left:1022.0px;top:212.0px;width:1px;height:35.5px;background:#cfcfcf"></div>
<div class="a" style="left:1149.0px;top:212.0px;width:1px;height:35.5px;background:#cfcfcf"></div>
<div class="a" style="left:8.0px;top:228.5px;width:1301.0px;height:1px;background:#c4c4c4"></div>
<div class="a" style="left:8.0px;top:247.0px;width:1301.0px;height:1px;background:#b5b5b5"></div>
<div class="a" style="left:42.0px;top:212.0px;width:2px;height:277.6px;background:#d2d2d2"></div>
<div class="a" style="left:8.0px;top:707.0px;width:1301.0px;height:23.5px;background:#fdfdfd repeating-linear-gradient(135deg,#fefefe 0,#fefefe 2.5px,#f2f2f2 2.5px,#f2f2f2 3.2px)"></div>
<div class="a" style="left:8.0px;top:706.5px;width:1301.0px;height:1px;background:#c6c6c6"></div>
<div class="a" style="left:745.0px;top:709.0px;width:137.0px;height:19.5px;border:1px dotted #cfcfcf;background:#fff"></div>
<div class="a" style="left:884.0px;top:709.0px;width:137.0px;height:19.5px;border:1px dotted #cfcfcf;background:#fff"></div>
<div class="a" style="left:1023.0px;top:709.0px;width:125.0px;height:19.5px;border:1px dotted #cfcfcf;background:#fff"></div>
<div class="a" style="left:1150.0px;top:709.0px;width:157.5px;height:19.5px;border:1px dotted #cfcfcf;background:#fff"></div>
<div class="a" style="left:7.5px;top:212.0px;width:1303.5px;height:519.0px;border:1px solid #b9b9b9;border-left:2px solid #d0d0d0;border-right:2px solid #cfcfcf"></div>
<div class="t b" style="left:45.50px;top:215.88px;font-size:9px;font-weight:bold;color:#141414;">Ngày</div>
<div class="t b" style="left:167.00px;top:215.88px;font-size:9px;font-weight:bold;color:#141414;">Chứng từ</div>
<div class="t b" style="left:302.00px;top:215.88px;font-size:9px;font-weight:bold;color:#141414;">Tên</div>
<div class="t b" style="left:500.00px;top:215.88px;font-size:9px;font-weight:bold;color:#141414;">Nội dung thu chi</div>
<div class="t b" style="left:747.00px;top:215.88px;font-size:9px;font-weight:bold;color:#141414;">Đầu kỳ</div>
<div class="t b" style="left:886.00px;top:215.88px;font-size:9px;font-weight:bold;color:#141414;">Thu</div>
<div class="t b" style="left:1025.00px;top:215.88px;font-size:9px;font-weight:bold;color:#141414;">Chi</div>
<div class="t b" style="left:1152.00px;top:215.88px;font-size:9px;font-weight:bold;color:#141414;">Cuối kỳ</div>
<svg class="a" style="left:11px;top:234px" width="6" height="8" viewBox="0 0 6 8"><ellipse cx="2.9" cy="2.6" rx="1.9" ry="1.7" fill="#111"/><path d="M1.6 3.2 L4.2 3.2 L3.2 7 L2.6 7 Z" fill="#111"/><rect x="2.6" y="1.2" width="0.6" height="1.6" fill="#fff"/></svg>
<div class="a" style="left:48.0px;top:237.2px;width:5.7px;height:1.8px;background:#8c8c8c"></div>
<svg class="a" style="left:167.0px;top:233px" width="12" height="10" viewBox="0 0 12 10"><rect x="0.6" y="3.6" width="1.1" height="3.6" fill="#555"/><rect x="3.3" y="1" width="5" height="7.8" rx="1.1" fill="#17892a"/><rect x="4.6" y="3" width="2.4" height="3.8" fill="#b9f3b9"/><path d="M10.6 3.8 H9.5 V7.2 H10.6" fill="none" stroke="#555" stroke-width="0.9"/></svg>
<svg class="a" style="left:302.0px;top:233px" width="12" height="10" viewBox="0 0 12 10"><rect x="0.6" y="3.6" width="1.1" height="3.6" fill="#555"/><rect x="3.3" y="1" width="5" height="7.8" rx="1.1" fill="#17892a"/><rect x="4.6" y="3" width="2.4" height="3.8" fill="#b9f3b9"/><path d="M10.6 3.8 H9.5 V7.2 H10.6" fill="none" stroke="#555" stroke-width="0.9"/></svg>
<svg class="a" style="left:500.0px;top:233px" width="12" height="10" viewBox="0 0 12 10"><rect x="0.6" y="3.6" width="1.1" height="3.6" fill="#555"/><rect x="3.3" y="1" width="5" height="7.8" rx="1.1" fill="#17892a"/><rect x="4.6" y="3" width="2.4" height="3.8" fill="#b9f3b9"/><path d="M10.6 3.8 H9.5 V7.2 H10.6" fill="none" stroke="#555" stroke-width="0.9"/></svg>
<div class="a" style="left:749.5px;top:237.2px;width:5.7px;height:1.8px;background:#8c8c8c"></div>
<div class="a" style="left:888.5px;top:237.2px;width:5.7px;height:1.8px;background:#8c8c8c"></div>
<div class="a" style="left:1027.5px;top:237.2px;width:5.7px;height:1.8px;background:#8c8c8c"></div>
<div class="a" style="left:1154.5px;top:237.2px;width:5.7px;height:1.8px;background:#8c8c8c"></div>
<svg class="a" style="left:12px;top:253.0px" width="5" height="7" viewBox="0 0 5 7"><path d="M0.5 0.5 L4 3.5 L0.5 6.5 Z" fill="#111"/></svg>
<svg class="a" style="left:47px;top:255.5px" width="6" height="4" viewBox="0 0 6 4"><path d="M0.3 0.3 L5.2 0.3 L2.75 3.2 Z" fill="#111"/></svg>
<div class="t b" style="left:58.20px;top:252.31px;font-size:9.2px;font-weight:bold;color:#161616;">Tên quỹ: Argibank</div>
<svg class="a" style="left:47px;top:350.5px" width="6" height="4" viewBox="0 0 6 4"><path d="M0.3 0.3 L5.2 0.3 L2.75 3.2 Z" fill="#111"/></svg>
<div class="t b" style="left:58.20px;top:347.31px;font-size:9.2px;font-weight:bold;color:#1a1cc0;">Tên quỹ: Tiền mặt</div>
<div class="t b" style="left:12.80px;top:270.37px;font-size:9.6px;font-weight:bold;color:#141414;">1</div>
<div class="t" style="left:500.50px;top:269.37px;font-size:9.6px;font-weight:normal;color:#222;">Số dư đầu kỳ</div>
<div class="t" style="right:439.20px;top:269.38px;font-size:10.3px;font-weight:normal;color:#222;">2,000,000,000</div>
<div class="t b" style="left:12.80px;top:288.37px;font-size:9.6px;font-weight:bold;color:#141414;">2</div>
<div class="t" style="left:60.50px;top:287.12px;font-size:9.9px;font-weight:normal;color:#222;">15/01/2024</div>
<div class="t" style="left:167.50px;top:287.46px;font-size:9.5px;font-weight:normal;color:#222;">CTN00001-300823</div>
<div class="t" style="left:500.50px;top:287.37px;font-size:9.6px;font-weight:normal;color:#222;">Nhận tiền nội bộ từ quỹ khác</div>
<div class="t" style="right:300.20px;top:287.38px;font-size:10.3px;font-weight:normal;color:#222;">1,000,000</div>
<div class="t b" style="left:12.80px;top:305.87px;font-size:9.6px;font-weight:bold;color:#141414;">3</div>
<div class="t" style="left:500.50px;top:304.87px;font-size:9.6px;font-weight:normal;color:#222;">Số dư cuối kỳ</div>
<div class="t" style="right:13.20px;top:304.88px;font-size:10.3px;font-weight:normal;color:#222;">2,001,000,000</div>
<div class="t b" style="left:12.80px;top:326.47px;font-size:9.6px;font-weight:bold;color:#141414;">3</div>
<div class="t b" style="left:12.80px;top:364.47px;font-size:9.6px;font-weight:bold;color:#141414;">4</div>
<div class="t" style="left:500.50px;top:363.47px;font-size:9.6px;font-weight:normal;color:#222;">Số dư đầu kỳ</div>
<div class="t" style="right:439.20px;top:363.48px;font-size:10.3px;font-weight:normal;color:#222;">200,000,000</div>
<div class="t b" style="left:12.80px;top:382.37px;font-size:9.6px;font-weight:bold;color:#141414;">5</div>
<div class="t" style="left:60.50px;top:381.12px;font-size:9.9px;font-weight:normal;color:#222;">15/01/2024</div>
<div class="t" style="left:167.50px;top:381.46px;font-size:9.5px;font-weight:normal;color:#222;">PTT00001-190723</div>
<div class="t" style="left:302.50px;top:381.59px;font-size:9.35px;font-weight:normal;color:#222;">Nguyễn Văn Sáng</div>
<div class="t" style="left:500.50px;top:381.37px;font-size:9.6px;font-weight:normal;color:#222;">Thu công nợ khách hàng</div>
<div class="t" style="right:300.20px;top:381.38px;font-size:10.3px;font-weight:normal;color:#222;">368,500</div>
<div class="t b" style="left:12.80px;top:400.27px;font-size:9.6px;font-weight:bold;color:#141414;">6</div>
<div class="t" style="left:60.50px;top:399.02px;font-size:9.9px;font-weight:normal;color:#222;">15/01/2024</div>
<div class="t" style="left:167.50px;top:399.36px;font-size:9.5px;font-weight:normal;color:#222;">PCT00001-190723</div>
<div class="t" style="left:302.50px;top:399.40px;font-size:9.45px;font-weight:normal;color:#222;">Công ty TNHH Thương mại Dịch vụ Điện n...</div>
<div class="t" style="left:500.50px;top:399.27px;font-size:9.6px;font-weight:normal;color:#222;">Chi trả tiền nhà cung cấp</div>
<div class="t" style="right:173.20px;top:399.28px;font-size:10.3px;font-weight:normal;color:#222;">4,155,558</div>
<div class="t b" style="left:12.80px;top:418.17px;font-size:9.6px;font-weight:bold;color:#141414;">7</div>
<div class="t" style="left:60.50px;top:416.92px;font-size:9.9px;font-weight:normal;color:#222;">15/01/2024</div>
<div class="t" style="left:167.50px;top:417.26px;font-size:9.5px;font-weight:normal;color:#222;">PCT00002-190723</div>
<div class="t" style="left:302.50px;top:417.39px;font-size:9.35px;font-weight:normal;color:#222;">Nguyễn Văn Sáng</div>
<div class="t" style="left:500.50px;top:417.17px;font-size:9.6px;font-weight:normal;color:#222;">Chi khác</div>
<div class="t" style="right:173.20px;top:417.18px;font-size:10.3px;font-weight:normal;color:#222;">53,878</div>
<div class="t b" style="left:12.80px;top:436.07px;font-size:9.6px;font-weight:bold;color:#141414;">8</div>
<div class="t" style="left:60.50px;top:434.82px;font-size:9.9px;font-weight:normal;color:#222;">15/01/2024</div>
<div class="t" style="left:167.50px;top:435.16px;font-size:9.5px;font-weight:normal;color:#222;">CTN00001-300823</div>
<div class="t" style="left:500.50px;top:435.07px;font-size:9.6px;font-weight:normal;color:#222;">Chuyển tiền nội bộ đến quỹ khác</div>
<div class="t" style="right:173.20px;top:435.08px;font-size:10.3px;font-weight:normal;color:#222;">1,000,000</div>
<div class="t b" style="left:12.80px;top:453.87px;font-size:9.6px;font-weight:bold;color:#141414;">9</div>
<div class="t" style="left:500.50px;top:452.87px;font-size:9.6px;font-weight:normal;color:#222;">Số dư cuối kỳ</div>
<div class="t" style="right:13.20px;top:452.88px;font-size:10.3px;font-weight:normal;color:#222;">195,159,064</div>
<div class="t b" style="left:12.80px;top:474.07px;font-size:9.6px;font-weight:bold;color:#141414;">9</div>
<div class="t b" style="right:440.50px;top:326.39px;font-size:9.7px;font-weight:bold;color:#e012e0;">2,000,000,000</div>
<div class="t b" style="right:301.50px;top:326.39px;font-size:9.7px;font-weight:bold;color:#e012e0;">1,000,000</div>
<div class="t b" style="right:174.50px;top:326.39px;font-size:9.7px;font-weight:bold;color:#e012e0;">0</div>
<div class="t b" style="right:16.00px;top:326.39px;font-size:9.7px;font-weight:bold;color:#e012e0;">2,001,000,000</div>
<div class="t b" style="right:440.50px;top:473.99px;font-size:9.7px;font-weight:bold;color:#e012e0;">200,000,000</div>
<div class="t b" style="right:301.50px;top:473.99px;font-size:9.7px;font-weight:bold;color:#e012e0;">368,500</div>
<div class="t b" style="right:174.50px;top:473.99px;font-size:9.7px;font-weight:bold;color:#e012e0;">5,209,436</div>
<div class="t b" style="right:16.00px;top:473.99px;font-size:9.7px;font-weight:bold;color:#e012e0;">195,159,064</div>
<div class="t b" style="right:441.00px;top:713.36px;font-size:10.8px;font-weight:bold;color:#e01414;">2,200,000,000</div>
<div class="t b" style="right:302.00px;top:713.36px;font-size:10.8px;font-weight:bold;color:#e01414;">1,368,500</div>
<div class="t b" style="right:175.00px;top:713.36px;font-size:10.8px;font-weight:bold;color:#e01414;">5,209,436</div>
<div class="t b" style="right:16.50px;top:713.36px;font-size:10.8px;font-weight:bold;color:#e01414;">2,196,159,064</div>
<div class="a" style="left:4px;top:737px;width:1310px;height:1px;border-top:1px dashed #c8c8c8"></div>
<div class="t b" style="left:8.30px;top:743.69px;font-size:8.05px;font-weight:bold;color:#151515;">Chảo mừng: Administrator đến với phần mềm MekongSoft</div>
<div class="a" style="left:241px;top:743px;width:1px;height:9px;background:#bdbdbd"></div>
<div class="t b" style="left:251.70px;top:743.69px;font-size:8.05px;font-weight:bold;color:#151515;">Version: 4.0.0</div>
<div class="a" style="left:312px;top:743px;width:1px;height:9px;background:#bdbdbd"></div>
<div class="t b" style="left:321.70px;top:743.43px;font-size:8.35px;font-weight:bold;color:#e01818;">Ngày: 15/01/2024 2:19:40 CH</div>
<div class="a" style="left:1108px;top:738px;width:1px;height:18px;border-left:1px dotted #bdbdbd"></div>
<div class="t b" style="right:8.80px;top:743.69px;font-size:8.05px;font-weight:bold;color:#151515;">@2023 MekongSoft. Thông tin hỗ trợ: 0901 000 508</div>
</body></html>
